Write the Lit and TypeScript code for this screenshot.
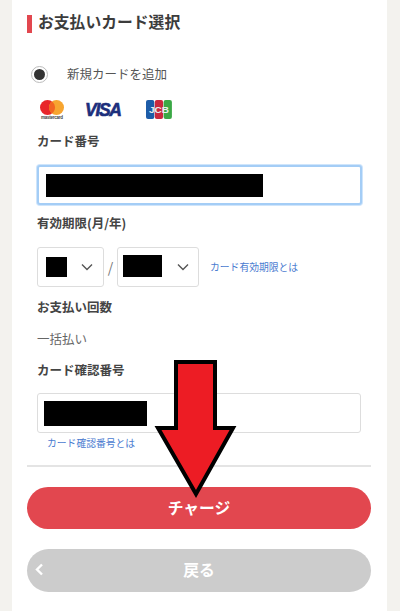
import { LitElement, html, css } from "lit";
import { customElement } from "lit/decorators.js";

@customElement("app-root")
export class AppRoot extends LitElement {
  static styles = css`
    :host { display: block; width: 400px; height: 611px; overflow: hidden; background: #f3f2ee; position: relative;
      font-family: "Noto Sans CJK JP", "Noto Sans", sans-serif; color: #444; }
    .panel { margin-left: 12px; width: 375px; height: 611px; box-sizing: border-box; background: #fff; padding: 15px 16px 0 15px; display: flex; flex-direction: column; }
    .heading { height: 18px; border-left: 5px solid #e2474f; padding-left: 6px; font-size: 15.800px; font-weight: 700; line-height: 14px; color: #3c3c3c; }
    .body { padding-left: 10px; display: flex; flex-direction: column; }
    .radio-row { margin-top: 32px; height: 18px; display: flex; align-items: center; }
    .radio { width: 17px; height: 17px; box-sizing: border-box; border-radius: 50%; border: 1px solid #bbb; display: flex; align-items: center; justify-content: center; margin-left: -6px; }
    .radio i { width: 11px; height: 11px; border-radius: 50%; background: #333; }
    .radio-label { margin-left: 19px; font-size: 12.500px; color: #555; line-height: 18px; }
    .logos { margin-top: 17px; height: 20px; display: flex; align-items: flex-start; padding-left: 3px; }
    .logos svg { display: block; }
    .label { font-size: 12.500px; font-weight: 700; line-height: 18px; height: 18px; color: #444; }
    .field { box-sizing: border-box; background: #fff; border: 1px solid #ddd; border-radius: 3px; display: flex; align-items: center; }
    .card { margin-top: 15px; width: 325px; height: 40px; border: 2px solid #a4cdf6; box-shadow: 0 0 0 1px #cfe5fb; padding-left: 7px; }
    .black { background: #000; display: block; }
    .expiry { margin-top: 15px; height: 40px; display: flex; align-items: center; }
    .select { height: 40px; justify-content: space-between; }
    .m { width: 67px; padding: 0 10px 0 8px; }
    .y { width: 82px; padding: 0 9px 0 5px; align-items: flex-start; }
    .y .black { margin-top: 7px; }
    .y svg { align-self: center; }
    .slash { width: 13px; text-align: center; font-size: 14px; color: #777; }
    .link { color: #4a7bd0; font-size: 9.800px; line-height: 14px; }
    .expiry .link { margin-left: 11px; }
    .once { margin-top: 14px; font-size: 12.500px; line-height: 18px; height: 18px; color: #666; }
    .cvc { margin-top: 14px; width: 324px; height: 40px; padding-left: 6px; }
    .cvc-link { margin-top: 3px; margin-left: 10px; height: 14px; }
    hr { margin: 15px 0 0; border: 0; height: 2px; background: #e4e4e4; }
    .btn { height: 42px; border-radius: 21px; display: flex; align-items: center; justify-content: center; color: #fff; font-size: 15.800px; font-weight: 700; position: relative; padding-bottom: 2px; box-sizing: border-box; }
    .charge { margin-top: 20px; background: #e2474f; }
    .back { margin-top: 20px; height: 43px; background: #ccc; border-radius: 22px; }
    .back svg { position: absolute; left: 8px; top: 14px; }
    .arrow { position: absolute; left: 150px; top: 355px; }
    .mc-text { font-family: "Liberation Sans", sans-serif; font-size: 4.500px; font-weight: 700; fill: #444; }
    .visa-text { font-family: "Liberation Sans", sans-serif; font-size: 17.500px; font-weight: 700; font-style: italic; fill: #1c2f7c; stroke: #1c2f7c; stroke-width: 0.600px; }
    .jcb-text { font-family: "Liberation Sans", sans-serif; font-size: 9px; font-weight: 700; fill: #e8f0f0; }
  `;

  render() {
    const chevron = html`<svg width="12" height="8" viewBox="0 0 12 8"><path d="M1 1.500 L6 6.500 L11 1.500" fill="none" stroke="#555" stroke-width="1.400"/></svg>`;
    return html`
      <div class="panel">
        <div class="heading">お支払いカード選択</div>
        <div class="body">
          <div class="radio-row">
            <span class="radio"><i></i></span>
            <span class="radio-label">新規カードを追加</span>
          </div>
          <div class="logos">
            <svg width="24" height="20" viewBox="0 0 24 20">
              <circle cx="7.500" cy="7.500" r="7.500" fill="#e8262a"/>
              <circle cx="16.500" cy="7.500" r="7.500" fill="#f7a530"/>
              <path d="M12 1.500a7.500 7.500 0 0 1 0 12a7.500 7.500 0 0 1 0-12z" fill="#f26522"/>
              <text class="mc-text" x="12" y="19" text-anchor="middle" textLength="22">mastercard</text>
            </svg>
            <svg style="margin-left:21px" width="38" height="20" viewBox="0 0 38 20">
              <text class="visa-text" x="0" y="15.500" textLength="37">VISA</text>
            </svg>
            <svg style="margin-left:23px" width="26" height="19" viewBox="0 0 26 19">
              <rect x="0" y="0" width="8.300" height="19" rx="2" fill="#1d5ca8"/>
              <rect x="8.800" y="0" width="8.300" height="19" rx="2" fill="#c9283e"/>
              <rect x="17.600" y="0" width="8.300" height="19" rx="2" fill="#3aa845"/>
              <text class="jcb-text" x="13" y="12.800" text-anchor="middle" textLength="20" lengthAdjust="spacingAndGlyphs">JCB</text>
            </svg>
          </div>
          <div class="label" style="margin-top:12px">カード番号</div>
          <div class="field card"><span class="black" style="width:217px;height:23px"></span></div>
          <div class="label" style="margin-top:9px">有効期限(月/年)</div>
          <div class="expiry">
            <div class="field select m"><span class="black" style="width:21px;height:20px"></span>${chevron}</div>
            <span class="slash">/</span>
            <div class="field select y"><span class="black" style="width:39px;height:22px"></span>${chevron}</div>
            <span class="link">カード有効期限とは</span>
          </div>
          <div class="label" style="margin-top:11px">お支払い回数</div>
          <div class="once">一括払い</div>
          <div class="label" style="margin-top:13px">カード確認番号</div>
          <div class="field cvc"><span class="black" style="width:103px;height:25px"></span></div>
          <div class="link cvc-link">カード確認番号とは</div>
        </div>
        <hr />
        <div class="btn charge">チャージ</div>
        <div class="btn back">
          <svg width="9" height="13" viewBox="0 0 9 13"><path d="M7 1.500 L2 6.500 L7 11.500" fill="none" stroke="#fff" stroke-width="2.400"/></svg>
          戻る
        </div>
      </div>
      <svg class="arrow" width="92" height="150" viewBox="150 355 92 150">
        <path d="M176 362 H215 V428 H233 L196 494 L158 428 H176 Z" fill="#ed1c24" stroke="#000" stroke-width="4"/>
      </svg>
    `;
  }
}
